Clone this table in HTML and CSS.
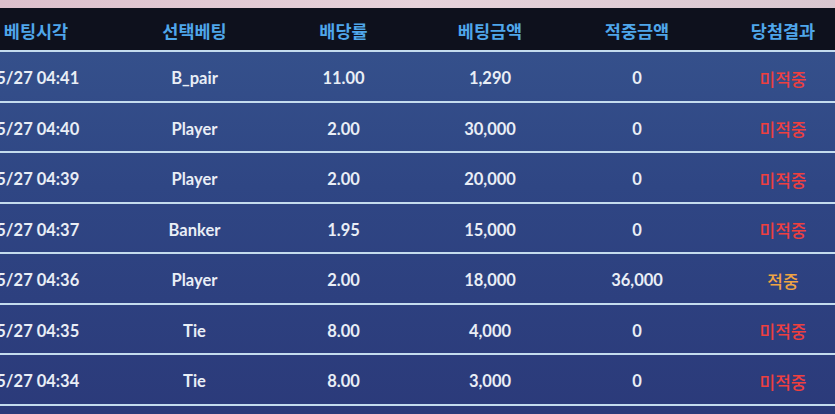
FILE: index.html
```html
<!DOCTYPE html>
<html lang="ko">
<head>
<meta charset="utf-8">
<title>베팅내역</title>
<link rel="stylesheet" href="styles.css">
</head>
<body>
<div class="screen">
  <div class="top-strip"></div>
  <div class="table-wrap">
    <table class="bets">
      <colgroup>
        <col class="c1"><col class="c2"><col class="c3"><col class="c4"><col class="c5"><col class="c6">
      </colgroup>
      <thead>
        <tr>
          <th class="first">베팅시각</th>
          <th>선택베팅</th>
          <th>배당률</th>
          <th>베팅금액</th>
          <th>적중금액</th>
          <th>당첨결과</th>
        </tr>
      </thead>
      <tbody>
        <tr><td class="time">05/27 04:41</td><td>B_pair</td><td>11.00</td><td>1,290</td><td>0</td><td class="lose">미적중</td></tr>
        <tr><td class="time">05/27 04:40</td><td>Player</td><td>2.00</td><td>30,000</td><td>0</td><td class="lose">미적중</td></tr>
        <tr><td class="time">05/27 04:39</td><td>Player</td><td>2.00</td><td>20,000</td><td>0</td><td class="lose">미적중</td></tr>
        <tr><td class="time">05/27 04:37</td><td>Banker</td><td>1.95</td><td>15,000</td><td>0</td><td class="lose">미적중</td></tr>
        <tr><td class="time">05/27 04:36</td><td>Player</td><td>2.00</td><td>18,000</td><td>36,000</td><td class="win">적중</td></tr>
        <tr><td class="time">05/27 04:35</td><td>Tie</td><td>8.00</td><td>4,000</td><td>0</td><td class="lose">미적중</td></tr>
        <tr><td class="time">05/27 04:34</td><td>Tie</td><td>8.00</td><td>3,000</td><td>0</td><td class="lose">미적중</td></tr>
      </tbody>
    </table>
  </div>
</div>
</body>
</html>
```

FILE: styles.css
```css
* { box-sizing: border-box; }
html, body {
  margin: 0;
  padding: 0;
  width: 835px;
  height: 414px;
  overflow: hidden;
  background: #2a3a78;
}
.screen {
  width: 835px;
  height: 414px;
  overflow: hidden;
  background: linear-gradient(180deg, #37548e 0%, #2f4684 45%, #2b3a7a 100%);
  font-family: "Lato", "Noto Sans CJK KR", sans-serif;
}
.top-strip {
  height: 8px;
  background: linear-gradient(90deg, #dcc0cc 0%, #e6d2da 50%, #d9c7d0 100%);
}
.table-wrap {
  margin-left: -46px;
  width: 902px;
}
.bets {
  width: 902px;
  border-collapse: collapse;
  table-layout: fixed;
}
.c1 { width: 164px; }
.c2 { width: 153px; }
.c3 { width: 145px; }
.c4 { width: 148px; }
.c5 { width: 146px; }
.c6 { width: 146px; }
.bets thead tr {
  background: #0e111d;
}
.bets th {
  height: 43px;
  padding: 3px 0 0;
  color: #4fa6ea;
  font-family: "Noto Sans CJK KR", sans-serif;
  font-weight: 700;
  font-size: 17.5px;
  text-align: center;
  vertical-align: middle;
}
.bets td {
  height: 50.5px;
  padding: 4px 0 0;
  border-top: 2px solid #c4dcee;
  color: #e9eef6;
  font-weight: 700;
  font-size: 16.5px;
  text-align: center;
  vertical-align: middle;
}
.bets td.time {
  padding-right: 6px;
}
.bets tbody tr:last-child td {
  border-bottom: 2px solid #c4dcee;
}
.bets td.lose {
  color: #ee3f3f;
  font-family: "Noto Sans CJK KR", sans-serif;
  font-weight: 500;
  font-size: 17px;
}
.bets td.win {
  color: #f0a443;
  font-family: "Noto Sans CJK KR", sans-serif;
  font-weight: 500;
  font-size: 17px;
}
```
